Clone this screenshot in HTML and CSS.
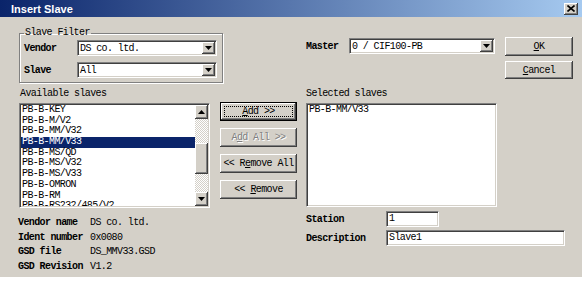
FILE: index.html
```html
<!DOCTYPE html>
<html lang="en">
<head>
    <meta charset="UTF-8">
    <title>Insert Slave</title>
    <link rel="stylesheet" href="styles.css">
</head>
<body>
    <div class="dialog">
        <div class="titlebar">
            <span class="title">Insert Slave</span>
            <span class="close">
                <svg width="8" height="7" viewBox="0 0 8 7"><path d="M0.5 0.5 L7.5 6.5 M7.5 0.5 L0.5 6.5" stroke="#000" stroke-width="1.6"/></svg>
            </span>
        </div>

        <div class="top">
            <fieldset class="filter">
                <legend>Slave Filter</legend>
                <div class="field">
                    <label>Vendor</label>
                    <div class="combo filter-combo"><span>DS co. ltd.</span><i class="drop"><svg width="7" height="4"><polygon points="0,0 7,0 3.5,4" fill="#000"/></svg></i></div>
                </div>
                <div class="field">
                    <label>Slave</label>
                    <div class="combo filter-combo"><span>All</span><i class="drop"><svg width="7" height="4"><polygon points="0,0 7,0 3.5,4" fill="#000"/></svg></i></div>
                </div>
            </fieldset>

            <div class="master">
                <label>Master</label>
                <div class="combo master-combo"><span>0 / CIF100-PB</span><i class="drop"><svg width="7" height="4"><polygon points="0,0 7,0 3.5,4" fill="#000"/></svg></i></div>
            </div>

            <div class="dlg-buttons">
                <button class="btn ok"><u>O</u>K</button>
                <button class="btn cancel"><u>C</u>ancel</button>
            </div>
        </div>

        <div class="captions">
            <span class="cap-left">Available slaves</span>
            <span>Selected slaves</span>
        </div>

        <div class="middle">
            <div class="listbox avail">
                <ul class="items">
                    <li>PB-B-KEY</li>
                    <li>PB-B-M/V2</li>
                    <li>PB-B-MM/V32</li>
                    <li class="sel">PB-B-MM/V33</li>
                    <li>PB-B-MS/QD</li>
                    <li>PB-B-MS/V32</li>
                    <li>PB-B-MS/V33</li>
                    <li>PB-B-OMRON</li>
                    <li>PB-B-RM</li>
                    <li>PB-B-RS232/485/V2</li>
                </ul>
                <div class="scrollbar">
                    <span class="sb-btn"><svg width="7" height="4"><polygon points="0,4 7,4 3.5,0" fill="#000"/></svg></span>
                    <span class="sb-track"><span class="sb-thumb"></span></span>
                    <span class="sb-btn"><svg width="7" height="4"><polygon points="0,0 7,0 3.5,4" fill="#000"/></svg></span>
                </div>
            </div>

            <div class="move-buttons">
                <button class="btn default"><u>A</u>dd &gt;&gt;</button>
                <button class="btn" disabled>A<u>d</u>d All &gt;&gt;</button>
                <button class="btn">&lt;&lt; R<u>e</u>move All</button>
                <button class="btn">&lt;&lt; <u>R</u>emove</button>
            </div>

            <div class="listbox chosen">
                <ul class="items">
                    <li>PB-B-MM/V33</li>
                </ul>
            </div>
        </div>

        <div class="bottom">
            <div class="info">
                <span class="info-label">Vendor name</span><span>DS co. ltd.</span>
                <span class="info-label">Ident number</span><span>0x0080</span>
                <span class="info-label">GSD file</span><span>DS_MMV33.GSD</span>
                <span class="info-label">GSD Revision</span><span>V1.2</span>
            </div>
            <div class="station">
                <div class="field">
                    <label>Station</label>
                    <div class="edit station-edit">1</div>
                </div>
                <div class="field">
                    <label>Description</label>
                    <div class="edit desc-edit">Slave1</div>
                </div>
            </div>
        </div>
    </div>
</body>
</html>
```

FILE: styles.css
```css
:root {
    --face: #d4d0c8;
    --shadow: #808080;
    --dark: #404040;
    --hilite: #0a246a;
}

body {
    margin: 0;
    background: #fff;
    font-family: "Liberation Mono", monospace;
    font-size: 10px;
    letter-spacing: -0.6px;
    color: #000;
}

.dialog {
    width: 582px;
    height: 277px;
    background: var(--face);
    overflow: hidden;
}

.titlebar {
    height: 17px;
    display: flex;
    align-items: center;
    justify-content: space-between;
    padding: 0 4px 0 11px;
    background: linear-gradient(to right, #0a246a, #a6caf0);
}

.title {
    font-family: "Liberation Sans", sans-serif;
    font-weight: bold;
    font-size: 11px;
    letter-spacing: 0;
    color: #fff;
}

.close {
    width: 14px;
    height: 12px;
    display: flex;
    align-items: center;
    justify-content: center;
    background: var(--face);
    box-shadow: inset -1px -1px var(--dark), inset 1px 1px #fff, inset -2px -2px var(--shadow);
}

/* raised and sunken pieces */
.btn, .drop, .sb-btn, .sb-thumb {
    background: var(--face);
    box-shadow: inset -1px -1px var(--dark), inset 1px 1px #fff, inset -2px -2px var(--shadow), inset 2px 2px var(--face);
}

.combo, .edit, .listbox {
    background: #fff;
    border: 1px solid;
    border-color: var(--shadow) #fff #fff var(--shadow);
    box-shadow: inset 1px 1px var(--dark), inset -1px -1px var(--face);
    box-sizing: border-box;
}

.btn {
    border: none;
    padding: 0;
    font: inherit;
    letter-spacing: inherit;
    color: #000;
    position: relative;
}

.btn:disabled {
    color: var(--shadow);
    text-shadow: 1px 1px #fff;
}

.btn.default {
    border: 1px solid #000;
}

.btn.default::after {
    content: "";
    position: absolute;
    inset: 3px;
    border: 1px dotted #000;
}

.combo {
    height: 16px;
    display: flex;
    align-items: center;
    justify-content: space-between;
    padding: 1px 1px 1px 2px;
}

.drop {
    width: 13px;
    height: 12px;
    display: flex;
    align-items: center;
    justify-content: center;
}

label {
    font-weight: bold;
}

/* top row */
.top {
    display: flex;
    height: 68px;
}

.filter {
    margin: 10px 0 0 19px;
    width: 204px;
    height: 56px;
    box-sizing: border-box;
    padding: 1px 4px 0 4px;
    border: 1px solid var(--shadow);
    box-shadow: inset 1px 1px #fff, 1px 1px #fff;
}

.filter legend {
    padding: 0 1px;
    line-height: 12px;
}

.field {
    display: flex;
    align-items: center;
}

.filter .field + .field {
    margin-top: 6px;
}

.filter label {
    width: 53px;
}

.filter-combo {
    width: 140px;
}

.master {
    display: flex;
    align-items: center;
    margin: 21px 0 0 83px;
    height: 16px;
}

.master label {
    width: 43px;
}

.master-combo {
    width: 146px;
}

.dlg-buttons {
    display: flex;
    flex-direction: column;
    gap: 5px;
    margin: 20px 0 0 10px;
}

.dlg-buttons .btn {
    width: 68px;
    height: 19px;
}

.dlg-buttons .cancel {
    height: 18px;
}

/* captions */
.captions {
    height: 18px;
    box-sizing: border-box;
    padding: 2px 0 0 20px;
    line-height: 14px;
    display: flex;
}

.cap-left {
    width: 286px;
}

/* lists and move buttons */
.middle {
    display: flex;
    height: 105px;
    padding-left: 19px;
}

.listbox {
    width: 191px;
    height: 105px;
    padding: 1px;
    display: flex;
    overflow: hidden;
}

.items {
    list-style: none;
    margin: 0;
    padding: 0;
    flex: 1;
    overflow: hidden;
}

.items li {
    height: 10.7px;
    line-height: 10.7px;
    padding-left: 1px;
    white-space: nowrap;
}

.items li.sel {
    background: var(--hilite);
    color: #fff;
}

.scrollbar {
    width: 13px;
    display: flex;
    flex-direction: column;
}

.sb-btn {
    height: 14px;
    display: flex;
    align-items: center;
    justify-content: center;
}

.sb-track {
    flex: 1;
    background: repeating-conic-gradient(#fff 0 25%, var(--face) 0 50%) 0 0 / 2px 2px;
}

.sb-thumb {
    display: block;
    height: 31px;
    margin-top: 24px;
}

.move-buttons {
    display: flex;
    flex-direction: column;
    gap: 7px;
    width: 77px;
    margin: -1px 0 0 10px;
}

.move-buttons .btn {
    height: 19px;
}

.chosen {
    margin-left: 9px;
    height: 104px;
}

/* bottom */
.bottom {
    display: flex;
    height: 69px;
}

.info {
    display: grid;
    grid-template-columns: 72px auto;
    align-content: start;
    width: 288px;
    padding: 8px 0 0 18px;
    line-height: 14.5px;
}

.info-label {
    font-weight: bold;
}

.station {
    margin-top: 3px;
}

.station label {
    width: 80px;
}

.station .field + .field {
    margin-top: 3px;
}

.edit {
    height: 16px;
    line-height: 13px;
    padding-left: 2px;
}

.station-edit {
    width: 53px;
}

.desc-edit {
    width: 179px;
}
```
